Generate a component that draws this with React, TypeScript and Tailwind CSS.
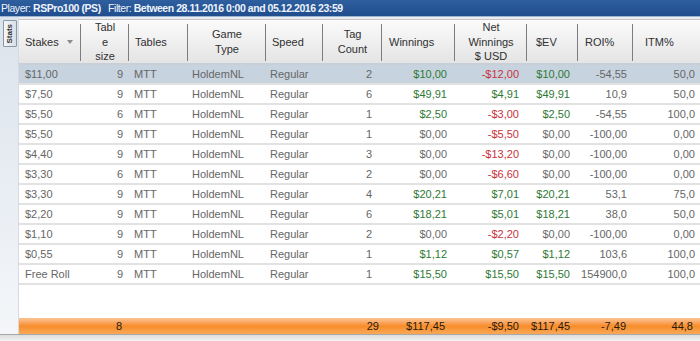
import React from "react";

type Row = {
  stake: string;
  size: string;
  tag: string;
  win: string;
  net: string;
  ev: string;
  roi: string;
  itm: string;
};

const rows: Row[] = [
  { stake: "$11,00", size: "9", tag: "2", win: "$10,00", net: "-$12,00", ev: "$10,00", roi: "-54,55", itm: "50,0" },
  { stake: "$7,50", size: "9", tag: "6", win: "$49,91", net: "$4,91", ev: "$49,91", roi: "10,9", itm: "50,0" },
  { stake: "$5,50", size: "6", tag: "1", win: "$2,50", net: "-$3,00", ev: "$2,50", roi: "-54,55", itm: "100,0" },
  { stake: "$5,50", size: "9", tag: "1", win: "$0,00", net: "-$5,50", ev: "$0,00", roi: "-100,00", itm: "0,00" },
  { stake: "$4,40", size: "9", tag: "3", win: "$0,00", net: "-$13,20", ev: "$0,00", roi: "-100,00", itm: "0,00" },
  { stake: "$3,30", size: "6", tag: "2", win: "$0,00", net: "-$6,60", ev: "$0,00", roi: "-100,00", itm: "0,00" },
  { stake: "$3,30", size: "9", tag: "4", win: "$20,21", net: "$7,01", ev: "$20,21", roi: "53,1", itm: "75,0" },
  { stake: "$2,20", size: "9", tag: "6", win: "$18,21", net: "$5,01", ev: "$18,21", roi: "38,0", itm: "50,0" },
  { stake: "$1,10", size: "9", tag: "2", win: "$0,00", net: "-$2,20", ev: "$0,00", roi: "-100,00", itm: "0,00" },
  { stake: "$0,55", size: "9", tag: "1", win: "$1,12", net: "$0,57", ev: "$1,12", roi: "103,6", itm: "100,0" },
  { stake: "Free Roll", size: "9", tag: "1", win: "$15,50", net: "$15,50", ev: "$15,50", roi: "154900,0", itm: "100,0" },
];

const GRID =
  "grid grid-cols-[62px_48px_59px_78px_57px_59px_73px_72px_51px_55px_67px]";

function money(v: string) {
  if (v.startsWith("-")) return "text-[#c8323c]";
  if (v === "$0,00") return "text-[#6a6a6a]";
  return "text-[#2e7a33]";
}

function HeaderCell({
  children,
  align = "left",
  pl = "pl-[6px]",
  last = false,
}: {
  children: React.ReactNode;
  align?: "left" | "center";
  pl?: string;
  last?: boolean;
}) {
  return (
    <div className="relative flex items-center h-full">
      <div
        className={`flex-1 ${align === "center" ? "text-center" : pl} leading-[14.5px]`}
      >
        {children}
      </div>
      {!last && (
        <div className="absolute right-0 top-[4px] bottom-[3px] w-px bg-[#7d7d7d]" />
      )}
    </div>
  );
}

export default function App() {
  return (
    <div
      className="w-[700px] h-[341px] overflow-hidden flex flex-col bg-white text-[11px]"
      style={{ fontFamily: '"Liberation Sans", Arial, sans-serif' }}
    >
      {/* Title bar */}
      <div className="h-[16px] bg-gradient-to-b from-[#2f5f9f] to-[#1f4d8d] text-[#eef3fa] text-[10.5px] tracking-[-0.45px] leading-[16px] pl-[1px] whitespace-nowrap">
        Player: <b>RSPro100 (PS)</b>&nbsp;&nbsp;&nbsp;Filter: <b>Between 28.11.2016 0:00 and 05.12.2016 23:59</b>
      </div>
      <div className="h-px bg-[#9fb4d0]" />

      <div className="flex h-[317px]">
        {/* Left strip */}
        <div className="w-[19px] bg-gradient-to-b from-[#dbe3ec] to-[#f4f6f9] pt-[3px] pl-[3px] border-r border-[#d6dbe2]">
          <div className="w-[14px] h-[27px] border border-[#8a97a8] rounded-[1px] bg-gradient-to-r from-[#f6f7f9] to-[#d9dee6] flex items-center justify-center">
            <span className="text-[8px] font-bold text-[#333] leading-none [writing-mode:vertical-rl] rotate-180">
              Stats
            </span>
          </div>
        </div>

        {/* Table */}
        <div className="w-[681px] flex flex-col">
          <div className="h-[2px] bg-[#e9edf2]" />
          {/* header */}
          <div
            className={`${GRID} h-[44px] bg-gradient-to-b from-[#fbfbfb] to-[#e4e4e4] border-t border-[#c4c4c4] text-[#303030]`}
          >
            <HeaderCell>
              <div className="flex items-center">
                <span>Stakes</span>
                <span className="ml-[8px] mt-[1px] w-0 h-0 border-l-[3.5px] border-r-[3.5px] border-t-[4px] border-l-transparent border-r-transparent border-t-[#8a8a8a]" />
              </div>
            </HeaderCell>
            <HeaderCell align="center">
              <div>Tabl</div>
              <div>e</div>
              <div>size</div>
            </HeaderCell>
            <HeaderCell>Tables</HeaderCell>
            <HeaderCell align="center">
              <div>Game</div>
              <div>Type</div>
            </HeaderCell>
            <HeaderCell>Speed</HeaderCell>
            <HeaderCell align="center">
              <div>Tag</div>
              <div>Count</div>
            </HeaderCell>
            <HeaderCell pl="pl-[7px]">Winnings</HeaderCell>
            <HeaderCell align="center">
              <div>Net</div>
              <div>Winnings</div>
              <div>$ USD</div>
            </HeaderCell>
            <HeaderCell pl="pl-[9px]">$EV</HeaderCell>
            <HeaderCell pl="pl-[7px]">ROI%</HeaderCell>
            <HeaderCell pl="pl-[12px]" last>
              ITM%
            </HeaderCell>
          </div>
          <div className="h-[2px] bg-[#c9cfd6]" />

          {/* rows */}
          {rows.map((r, i) => (
            <div
              key={i}
              className={`${GRID} h-[20px] items-center border-b-2 border-[#e2e2e2] text-[#666] ${
                i === 0 ? "bg-[#c7d3df]" : "bg-white"
              }`}
            >
              <div className="pl-[6px]">{r.stake}</div>
              <div className="text-right pr-[6px]">{r.size}</div>
              <div className="pl-[5px]">MTT</div>
              <div className="pl-[4px]">HoldemNL</div>
              <div className="pl-[4px]">Regular</div>
              <div className="text-right pr-[10px]">{r.tag}</div>
              <div className={`text-right pr-[8px] ${money(r.win)}`}>{r.win}</div>
              <div className={`text-right pr-[8px] ${money(r.net)}`}>{r.net}</div>
              <div className={`text-right pr-[8px] ${money(r.ev)}`}>{r.ev}</div>
              <div className="text-right pr-[6px]">{r.roi}</div>
              <div className="text-right pr-[5px]">{r.itm}</div>
            </div>
          ))}

          <div className="flex-1 bg-white" />

          {/* footer */}
          <div
            className={`${GRID} h-[16px] items-center bg-gradient-to-b from-[#fcc494] via-[#f78d28] to-[#f9a856] text-[#2a1a0c]`}
          >
            <div />
            <div className="text-right pr-[7px]">8</div>
            <div />
            <div />
            <div />
            <div className="text-right pr-[3px]">29</div>
            <div className="text-right pr-[10px]">$117,45</div>
            <div className="text-right pr-[8px]">-$9,50</div>
            <div className="text-right pr-[8px]">$117,45</div>
            <div className="text-right pr-[7px]">-7,49</div>
            <div className="text-right pr-[7px]">44,8</div>
          </div>
        </div>
      </div>

      {/* bottom */}
      <div className="flex-1 border-t border-[#a9a9a9] bg-gradient-to-b from-[#dcdcdc] to-[#f2f2f2]" />
    </div>
  );
}
